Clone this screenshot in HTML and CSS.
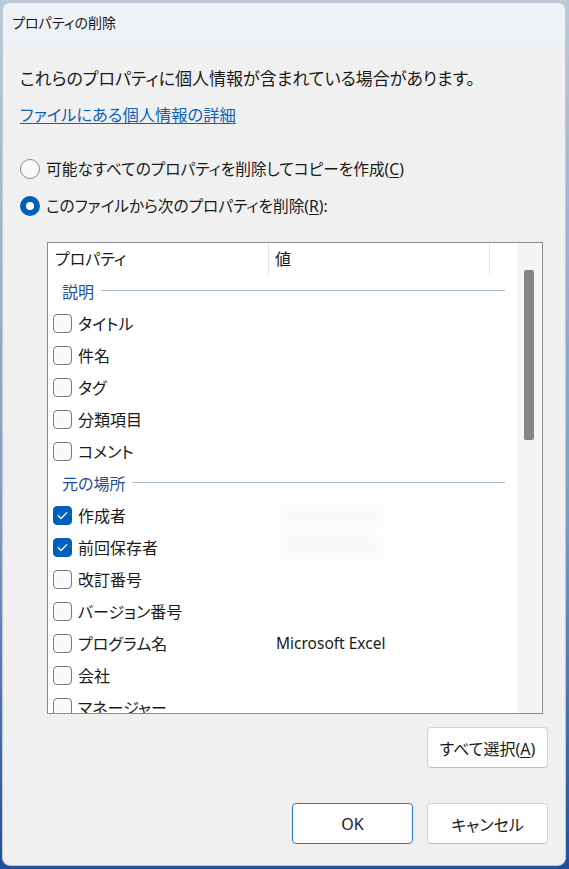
FILE: index.html
```html
<!DOCTYPE html>
<html lang="ja">
<head>
<meta charset="utf-8">
<title>プロパティの削除</title>
<link rel="stylesheet" href="styles.css">
</head>
<body>
<div class="window">
  <div class="titlebar">プロパティの削除</div>
  <div class="content">
    <p class="intro">これらのプロパティに個人情報が含まれている場合があります。</p>
    <a class="link" href="#">ファイルにある個人情報の詳細</a>
    <div class="radios">
      <label class="radio"><span class="dot"></span><span>可能なすべてのプロパティを削除してコピーを作成(<u>C</u>)</span></label>
      <label class="radio checked"><span class="dot"></span><span>このファイルから次のプロパティを削除(<u>R</u>):</span></label>
    </div>
    <div class="listbox">
      <div class="list">
        <div class="header">
          <div class="hcell c1">プロパティ</div>
          <div class="hcell c2">値</div>
          <div class="hcell c3"></div>
        </div>
        <div class="group"><span>説明</span><span class="rule"></span></div>
        <div class="row"><span class="cb"></span><span class="name">タイトル</span><span class="val"></span></div>
        <div class="row"><span class="cb"></span><span class="name">件名</span><span class="val"></span></div>
        <div class="row"><span class="cb"></span><span class="name">タグ</span><span class="val"></span></div>
        <div class="row"><span class="cb"></span><span class="name">分類項目</span><span class="val"></span></div>
        <div class="row"><span class="cb"></span><span class="name">コメント</span><span class="val"></span></div>
        <div class="group"><span>元の場所</span><span class="rule"></span></div>
        <div class="row"><span class="cb on"><svg viewBox="0 0 19 19" width="19" height="19"><path d="M5.2 9.8 L8 12.5 L13.8 6.6" fill="none" stroke="#fff" stroke-width="1.3" stroke-linecap="round" stroke-linejoin="round"/></svg></span><span class="name">作成者</span><span class="val"><span class="blur"></span></span></div>
        <div class="row"><span class="cb on"><svg viewBox="0 0 19 19" width="19" height="19"><path d="M5.2 9.8 L8 12.5 L13.8 6.6" fill="none" stroke="#fff" stroke-width="1.3" stroke-linecap="round" stroke-linejoin="round"/></svg></span><span class="name">前回保存者</span><span class="val"><span class="blur"></span></span></div>
        <div class="row"><span class="cb"></span><span class="name">改訂番号</span><span class="val"></span></div>
        <div class="row"><span class="cb"></span><span class="name">バージョン番号</span><span class="val"></span></div>
        <div class="row"><span class="cb"></span><span class="name">プログラム名</span><span class="val">Microsoft Excel</span></div>
        <div class="row"><span class="cb"></span><span class="name">会社</span><span class="val"></span></div>
        <div class="row"><span class="cb"></span><span class="name">マネージャー</span><span class="val"></span></div>
      </div>
      <div class="scrollbar"><div class="thumb"></div></div>
    </div>
    <div class="selectall"><button class="btn">すべて選択(<u>A</u>)</button></div>
    <div class="footer">
      <button class="btn primary">OK</button>
      <button class="btn">キャンセル</button>
    </div>
  </div>
</div>
</body>
</html>
```
FILE: styles.css
```css
* { box-sizing: border-box; }
html, body { margin: 0; padding: 0; }
body {
  width: 569px;
  height: 869px;
  background: linear-gradient(180deg, #b9c9da 0%, #7d9bc2 60%, #1f4f9e 100%);
  font-family: "Noto Sans", "Noto Sans CJK JP", sans-serif;
  font-feature-settings: "palt";
  color: #1a1a1a;
  padding: 2px 3px 3px 2px;
  overflow: hidden;
}
.window {
  width: 564px;
  height: 864px;
  background: #f0f0f0;
  border: 1px solid #c4c8cc;
  border-radius: 8px;
  overflow: hidden;
  display: flex;
  flex-direction: column;
}
.titlebar {
  height: 40px;
  background: #eef2f7;
  font-size: 14px;
  line-height: 40px;
  padding-left: 9px;
  color: #1a1a1a;
}
.content {
  flex: 1;
  padding: 24px 17px 0 17px;
  display: flex;
  flex-direction: column;
}
.intro {
  margin: 0;
  font-size: 17px;
  line-height: 24px;
}
.link {
  margin-top: 12px;
  font-size: 16.3px;
  line-height: 24px;
  color: #0a64b4;
  text-decoration: underline;
  text-underline-offset: 2px;
  align-self: flex-start;
}
.radios {
  margin-top: 30px;
  display: flex;
  flex-direction: column;
  gap: 13px;
}
.radio {
  display: flex;
  align-items: center;
  gap: 6px;
  height: 24px;
  font-size: 15.7px;
  line-height: 24px;
}
.radio u, .btn u { text-underline-offset: 2px; }
.dot {
  width: 20px;
  height: 20px;
  border-radius: 50%;
  border: 1px solid #8a8a8a;
  background: #fafafa;
  flex: none;
}
.radio.checked .dot {
  border: 6px solid #005fb8;
  background: #fff;
}
.listbox {
  margin-top: 24px;
  margin-left: 27px;
  width: 496px;
  height: 472px;
  border: 1px solid #8c8c8c;
  background: #fff;
  display: flex;
}
.list {
  flex: 1;
  overflow: hidden;
}
.header {
  display: flex;
  height: 32px;
  font-size: 16px;
  line-height: 32px;
}
.hcell { padding-left: 7px; }
.c1 { width: 221px; border-right: 1px solid #e5e5e5; }
.c2 { width: 221px; border-right: 1px solid #e5e5e5; padding-left: 6px; }
.c3 { flex: 1; }
.group {
  display: flex;
  align-items: center;
  height: 32px;
  padding-left: 14px;
  padding-right: 12px;
  font-size: 16px;
  color: #1f4f96;
  gap: 7px;
}
.rule {
  flex: 1;
  height: 1px;
  background: #a9bfd0;
  margin-top: -2px;
}
.row {
  display: flex;
  align-items: center;
  height: 32px;
  font-size: 16px;
  padding-left: 5px;
}
.cb {
  width: 19px;
  height: 19px;
  border: 1px solid #7a7a7a;
  border-radius: 4px;
  background: #fafafa;
  flex: none;
  display: flex;
}
.cb.on {
  background: #005fb8;
  border-color: #005fb8;
}
.cb.on svg { margin: -1px; }
.name {
  width: 198px;
  padding-left: 6px;
}
.val {
  flex: 1;
  padding-left: 6px;
  font-family: "Noto Sans", "Open Sans", sans-serif;
  font-size: 15.5px;
}
.blur {
  display: block;
  width: 110px;
  height: 22px;
  background: #efefef;
  border-radius: 10px;
  filter: blur(8px);
  opacity: 0.45;
}
.scrollbar {
  width: 25px;
  background: #f5f5f5;
  padding: 27px 7px 0 7px;
}
.thumb {
  width: 10px;
  height: 170px;
  background: #858585;
  border-radius: 2px;
}
.selectall {
  margin-top: 13px;
  display: flex;
  justify-content: flex-end;
}
.footer {
  margin-top: 35px;
  display: flex;
  justify-content: flex-end;
  gap: 14px;
}
.btn {
  width: 121px;
  height: 41px;
  font-family: "Noto Sans", "Noto Sans CJK JP", sans-serif;
  font-feature-settings: "palt";
  font-size: 16px;
  color: #1a1a1a;
  background: #fdfdfd;
  border: 1px solid #d3d3d3;
  border-bottom-color: #c2c2c2;
  border-radius: 4px;
  padding: 0;
}
.btn.primary {
  border: 1px solid #2a78c4;
}
```
